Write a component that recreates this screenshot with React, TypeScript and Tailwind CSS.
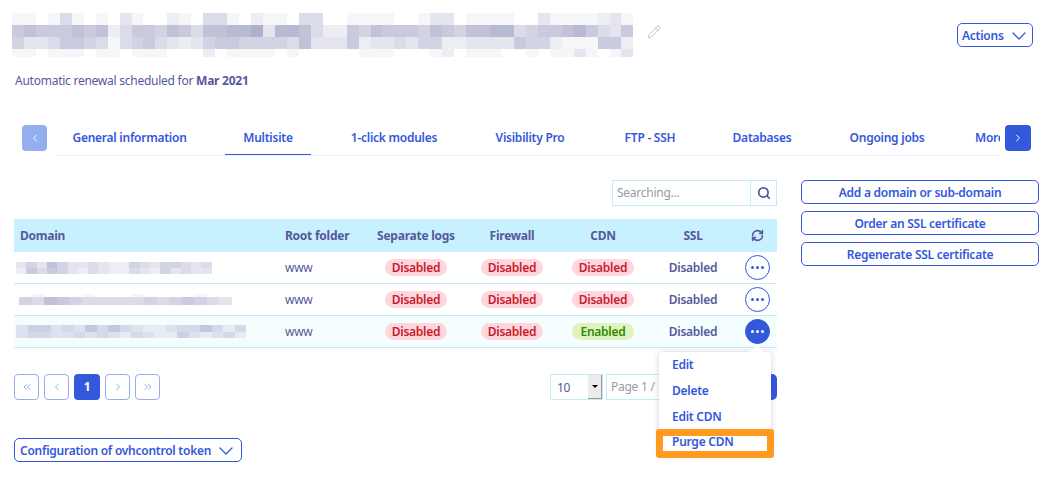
import { ChevronDown, ChevronLeft, ChevronRight, ChevronsLeft, ChevronsRight, Pencil, RefreshCw, Search } from "lucide-react";

function Mosaic({ rows, cell, heights, className }: { rows: string[]; cell: number; heights: number[]; className?: string }) {
  const width = Math.max(...rows.map((r) => r.length)) * cell;
  const height = heights.reduce((a, b) => a + b, 0);
  let y = 0;
  const rects: React.ReactNode[] = [];
  rows.forEach((row, ri) => {
    row.split("").forEach((c, ci) => {
      const v = Number(c);
      if (v > 0) rects.push(<rect key={`${ri}-${ci}`} x={ci * cell} y={y} width={cell} height={heights[ri]} fill="#4d4f8f" opacity={v * 0.05} />);
    });
    y += heights[ri];
  });
  return (
    <svg width={width} height={height} className={className} shapeRendering="crispEdges">
      {rects}
    </svg>
  );
}

const title = [
  "1101410103100210441021104400111100133011110031111231",
  "6766676724665764778893887422657666576577884566786436",
  "5334665414564323566555547333623343552233336552111662",
  "1101110110111000201111010000011100012011100101131013",
];

const tabs = [
  { t: "General information", w: "w-[151px] text-center" },
  { t: "Multisite", w: "w-[86px] text-center border-b border-[#3358dc]" },
  { t: "1-click modules", w: "w-[126px] text-center" },
  { t: "Visibility Pro", w: "w-[106px] text-center" },
  { t: "FTP - SSH", w: "w-[94px] text-center" },
  { t: "Databases", w: "w-[90px] text-center" },
  { t: "Ongoing jobs", w: "w-[120px] text-center" },
  { t: "More", w: "w-[60px] pl-[8px]" },
];

const gridCols = "grid grid-cols-[265px_90px_94px_98px_84px_96px_36px]";

function Pill({ on }: { on?: boolean }) {
  return (
    <span className={`inline-block h-[17px] w-[62px] rounded-full text-center text-[12px] leading-[17px] font-semibold ${on ? "bg-[#dff3bf] text-[#2f8a00]" : "bg-[#ffd6de] text-[#c8202a]"}`}>
      {on ? "Enabled" : "Disabled"}
    </span>
  );
}

const domainRows = [
  { rows: ["3537533432254355434", "2646532432243253433"], heights: [6, 6], cls: "ml-[2px]" },
  { rows: ["01000100010000100", "54765444445456543"], heights: [3, 8], cls: "ml-[5px]" },
  { rows: ["35534364643223446424", "34433434324322532342"], heights: [7, 6], cls: "ml-[2px]" },
];

function Row({ i, cdn, active }: { i: number; cdn?: boolean; active?: boolean }) {
  const d = domainRows[i];
  return (
    <div className={`${gridCols} h-[32px] items-center border-b border-[#c5ecf6] text-[12px] ${active ? "bg-[#f5feff]" : "bg-white"}`}>
      <div className={d.cls}>
        <Mosaic rows={d.rows} cell={i === 0 ? 10.3 : i === 1 ? 12.5 : 11.5} heights={d.heights} className="blur-[0.6px]" />
      </div>
      <div className="pl-[6px] text-[12px] leading-[18px]">www</div>
      <div className="text-center"><Pill /></div>
      <div className="text-center"><Pill /></div>
      <div className="text-center"><Pill on={cdn} /></div>
      <div className="text-center font-semibold">Disabled</div>
      <div className="flex pl-[4px]">
        <span className={`flex h-[25px] w-[25px] items-center justify-center gap-[2px] rounded-full border ${active ? "border-[#3358dc] bg-[#3358dc]" : "border-[#3358dc] bg-white"}`}>
          {[0, 1, 2].map((k) => (
            <span key={k} className={`h-[3px] w-[3px] rounded-full ${active ? "bg-white" : "bg-[#3358dc]"}`} />
          ))}
        </span>
      </div>
    </div>
  );
}

function PageBtn({ children, className = "" }: { children: React.ReactNode; className?: string }) {
  return (
    <span className={`flex h-[26px] w-[25px] items-center justify-center rounded-[4px] border border-[#95aef0] text-[#95aef0] ${className}`}>
      {children}
    </span>
  );
}

const outlineBtn = "flex h-[24px] items-center justify-center rounded-[5px] border border-[#3358dc] pt-[1px] text-[12px] font-semibold text-[#3358dc]";

export default function App() {
  return (
    <div className="relative h-[503px] w-[1051px] overflow-hidden bg-white pt-[13px] tracking-[-0.25px] text-[#55599a]" style={{ fontFamily: '"Noto Sans", sans-serif' }}>
      <div className="flex items-start pl-[12px] pr-[18px]">
        <Mosaic rows={title} cell={11.95} heights={[12, 12, 12, 8]} className="shrink-0" />
        <Pencil size={14} strokeWidth={1} className="ml-[14px] mt-[12px] shrink-0 text-[#8e90b5]" />
        <button className={`${outlineBtn} ml-auto mt-[10px] w-[76px] justify-start! gap-[3px] pl-[4px]`}>
          Actions <ChevronDown size={24} strokeWidth={1.3} className="-my-[2px] shrink-0" />
        </button>
      </div>

      <p className="mt-[15px] pl-[15px] text-[12px] leading-[18px]">
        Automatic renewal scheduled for <strong className="font-bold">Mar 2021</strong>
      </p>

      <div className="mt-[35px] flex items-start pl-[22px]">
        <span className="flex h-[26px] w-[25px] shrink-0 items-center justify-center rounded-[4px] bg-[#94aff0] text-white">
          <ChevronLeft size={12} />
        </span>
        <div className="ml-[7px] flex h-[31px] w-[946px] shrink-0 gap-[20px] overflow-hidden border-b border-[#eaf4fb]">
          {tabs.map(({ t, w }) => (
            <div key={t} className={`${w} h-[30px] shrink-0 pt-[4px] text-[12px] font-semibold whitespace-nowrap text-[#3358dc]`}>
              {t}
            </div>
          ))}
        </div>
        <span className="ml-[5px] flex h-[26px] w-[26px] shrink-0 items-center justify-center rounded-[4px] bg-[#3358dc] text-white">
          <ChevronRight size={12} />
        </span>
      </div>

      <div className="mt-[24px] flex items-start pl-[14px]">
        <div className="w-[763px] shrink-0">
          <div className="flex justify-end">
            <div className="flex h-[26px] w-[165px] border border-[#c5ecf6]">
              <span className="flex-1 pl-[4px] text-[12px] leading-[24px] text-[#9a9aa0]">Searching...</span>
              <span className="flex w-[26px] items-center justify-center border-l border-[#c5ecf6]">
                <Search size={14} strokeWidth={3} className="text-[#55599a]" />
              </span>
            </div>
          </div>
          <div className={`${gridCols} mt-[13px] h-[33px] items-center bg-[#c7f1ff] text-[12px] font-bold`}>
            <div className="pl-[6px]">Domain</div>
            <div className="pl-[6px]">Root folder</div>
            <div className="text-center">Separate logs</div>
            <div className="text-center">Firewall</div>
            <div className="text-center">CDN</div>
            <div className="text-center">SSL</div>
            <div className="flex pl-[10px]"><RefreshCw size={13} strokeWidth={3} /></div>
          </div>
          <Row i={0} />
          <Row i={1} />
          <Row i={2} cdn active />

          <div className="mt-[26px] flex items-start">
            <div className="flex gap-[5px]">
              <PageBtn><ChevronsLeft size={12} /></PageBtn>
              <PageBtn><ChevronLeft size={12} /></PageBtn>
              <span className="flex h-[26px] w-[26px] items-center justify-center rounded-[4px] bg-[#3358dc] text-[12px] font-bold text-white">1</span>
              <PageBtn><ChevronRight size={12} /></PageBtn>
              <PageBtn><ChevronsRight size={12} /></PageBtn>
            </div>
            <div className="ml-auto flex">
              <div className="flex h-[26px] w-[53px] items-stretch border border-[#c5ecf6]">
                <span className="flex-1 pl-[6px] text-[12px] leading-[26px]">10</span>
                <span className="flex w-[14px] items-center justify-center border-b border-r border-[#9b9b9b] bg-[#ececec]">
                  <span className="h-0 w-0 border-x-[3px] border-t-[3px] border-x-transparent border-t-black" />
                </span>
              </div>
              <div className="ml-[3px] h-[26px] w-[144px] border border-[#c5ecf6] pl-[4px] text-[12px] leading-[24px] text-[#9a9aa0]">Page 1 / 1</div>
              <span className="h-[26px] w-[27px] rounded-r-[5px] bg-[#3358dc]" />
            </div>
          </div>

          <button className={`${outlineBtn} mt-[38px] w-[228px] justify-start! gap-[3px] pl-[5px] whitespace-nowrap`}>
            Configuration of ovhcontrol token <ChevronDown size={24} strokeWidth={1.3} className="-my-[2px] shrink-0" />
          </button>
        </div>

        <div className="ml-[24px] flex w-[238px] shrink-0 flex-col gap-[7px]">
          <button className={outlineBtn}>Add a domain or sub-domain</button>
          <button className={outlineBtn}>Order an SSL certificate</button>
          <button className={outlineBtn}>Regenerate SSL certificate</button>
        </div>
      </div>

      {/* Open action menu */}
      <div className="absolute left-[659px] top-[352px] h-[100px] w-[112px] rounded-[4px] bg-white text-[12px] font-semibold text-[#3358dc] shadow-[0_0_6px_rgba(80,84,143,0.25)]">
        <span className="absolute -top-[5px] left-[93px] h-[10px] w-[10px] rotate-45 bg-white" />
        <div className="relative flex flex-col pl-[13px] leading-[26px]">
          <span>Edit</span>
          <span>Delete</span>
          <span>Edit CDN</span>
        </div>
      </div>
      {/* Orange highlight added over the screenshot */}
      <div className="absolute left-[656px] top-[429px] h-[29px] w-[118px] rounded-[3px] border-[7px] border-[#ff9a1f] bg-white pl-[9px] text-[12px] leading-[12px] font-semibold text-[#3358dc]">
        Purge CDN
      </div>
    </div>
  );
}
